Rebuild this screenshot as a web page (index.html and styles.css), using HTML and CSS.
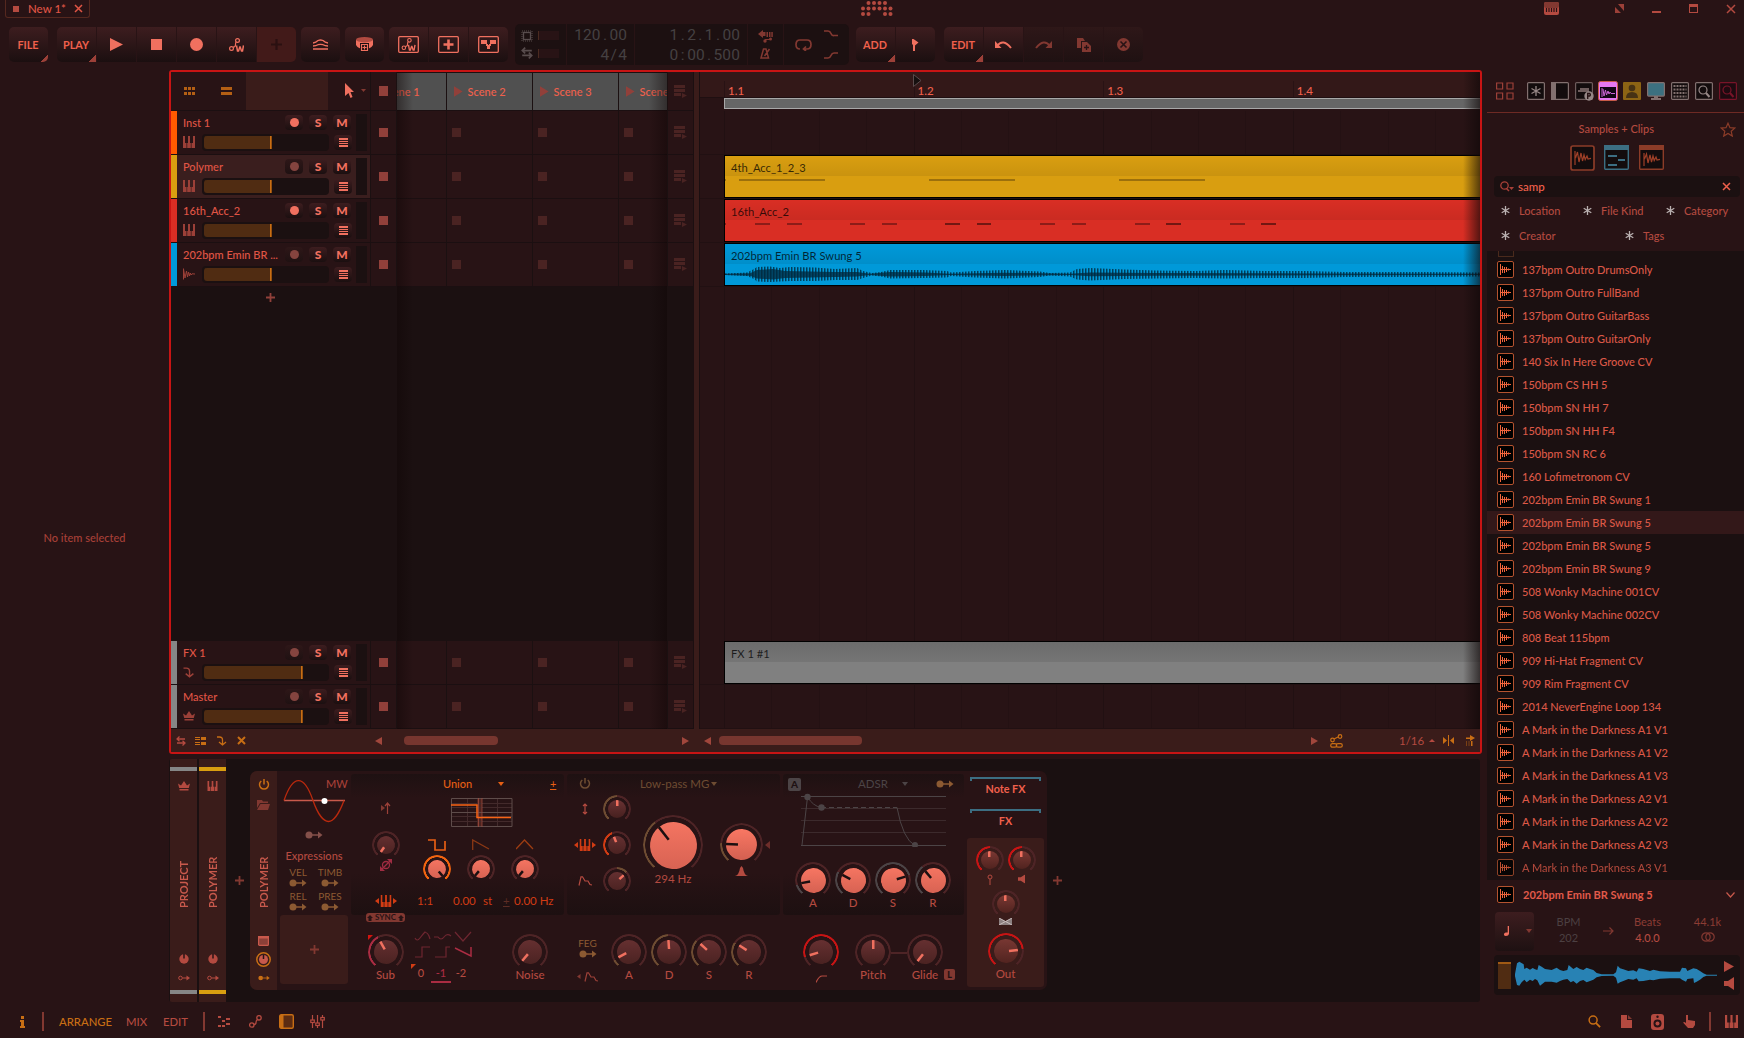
FILE: index.html
```html
<!DOCTYPE html>
<html lang="en">
<head>
<meta charset="utf-8">
<title>New 1*</title>
<link rel="stylesheet" href="styles.css">
</head>
<body>
<svg class="sprite" aria-hidden="true">
  <symbol id="piano" viewBox="0 0 12 12"><path fill="currentColor" d="M0 0h2v7h1.500v5H0zM4.200 7H5V0h2v7h.8v5H4.200zM8.500 7H10V0h2v12H8.500z"/></symbol>
  <symbol id="wave" viewBox="0 0 12 12"><path fill="none" stroke="currentColor" d="M.5 .5v11M.5 1l1.500 9L3.500 3l1 6L5.500 4l1 4 .8-3 .9 2 .8-1.200L12 6"/></symbol>
  <symbol id="crown" viewBox="0 0 12 10"><path fill="currentColor" d="M0 2.500l3 2L6 0l3 4.500 3-2L10.800 7H1.200zM1.500 8h9v1.500h-9z"/></symbol>
  <symbol id="fxarrow" viewBox="0 0 10 10"><path fill="none" stroke="currentColor" stroke-width="1.300" d="M0 1h2.500q3 0 3 3v5M2 6l3.500 3L9 6"/></symbol>
  <symbol id="mod" viewBox="0 0 18 8"><circle cx="4" cy="4" r="3.500" fill="currentColor"/><path stroke="currentColor" stroke-width="1.300" d="M7 4h7"/><path fill="currentColor" d="M13 .5L17.500 4 13 7.500z"/></symbol>
  <symbol id="modo" viewBox="0 0 12 6"><circle cx="2.500" cy="3" r="1.800" fill="none" stroke="currentColor"/><path stroke="currentColor" d="M4.500 3h5"/><path fill="currentColor" d="M8.500 .5L12 3 8.500 5.500z"/></symbol>
  <symbol id="plus" viewBox="0 0 10 10"><path stroke="currentColor" stroke-width="2" d="M5 0v10M0 5h10"/></symbol>
  <symbol id="list" viewBox="0 0 9 9"><path fill="currentColor" d="M0 0h9v2H0zM0 3h9v1H0zM0 5h9v1H0zM0 7h9v2H0z"/></symbol>
  <symbol id="ret" viewBox="0 0 13 13"><path fill="currentColor" d="M0 0h11v3H0zM0 4h11v3H0zM0 8h7v3H0zM8 8l5 2.500L8 13z"/></symbol>
  <symbol id="autow" viewBox="0 0 15 14"><g fill="none" stroke="currentColor" stroke-width="1.200"><circle cx="2.500" cy="10.500" r="1.900"/><circle cx="8.500" cy="2.500" r="1.900"/><path d="M4 9.200q2.500 0 2.500-2.500t1-2.500"/><path stroke-width="1.500" d="M7.500 7.500l1 5.500h1l1.300-4h.4l1.300 4h1l1-5.500"/></g></symbol>
  <symbol id="swap" viewBox="0 0 10 10"><path fill="none" stroke="currentColor" stroke-width="1.300" d="M1 3h8M3.500 .5L1 3l2.500 2.300M1 7h8M6.500 4.700L9 7 6.500 9.500"/></symbol>
  <symbol id="power" viewBox="0 0 12 12"><path fill="none" stroke="currentColor" stroke-width="1.500" d="M6 0v5.500M3.300 2a4.500 4.500 0 1 0 5.400 0"/></symbol>
  <symbol id="star" viewBox="0 0 9 9"><path stroke="currentColor" stroke-width="1.300" d="M4.500 0v9M.7 2.300l7.600 4.400M.7 6.700l7.600-4.400"/></symbol>
  <symbol id="cross" viewBox="0 0 9 9"><path stroke="currentColor" stroke-width="1.500" d="M1 1l7 7M8 1L1 8"/></symbol>
  <symbol id="search" viewBox="0 0 14 14"><circle cx="5.500" cy="5.500" r="4.300" fill="none" stroke="currentColor" stroke-width="1.600"/><path stroke="currentColor" stroke-width="2" d="M8.500 8.500l4.500 4.500"/></symbol>
  <symbol id="sample" viewBox="0 0 17 17"><rect x=".5" y=".5" width="16" height="16" rx="1.500" fill="#000" stroke="#b4532f"/><path stroke="#f0643c" d="M3.500 3v11M5.500 5v7M7.500 6v6M9.500 6v5M11.500 7.500v2M3.500 8.500H14"/></symbol>
  <symbol id="env" viewBox="0 0 14 10"><path fill="none" stroke="currentColor" stroke-width="1.200" d="M1 9.500L3 .8h1.500L7 5h3l2 3.500 2 .5"/></symbol>
  <symbol id="dial" viewBox="0 0 10 10"><circle cx="5" cy="5" r="4.700" fill="currentColor"/><path stroke="#281315" stroke-width="1.500" d="M5 0v4.500"/></symbol>
  <symbol id="spk" viewBox="0 0 10 13"><path fill="currentColor" d="M0 4h4l6-4v13L4 9H0z"/></symbol>
</svg>

<header class="titlebar">
  <div class="tab"><i class="dot"></i><span>New 1*</span><svg width="9" height="9"><use href="#cross"/></svg></div>
  <svg class="logo" width="32" height="16"><g fill="#b44a40"><circle cx="7.500" cy="3" r="2"/><circle cx="13" cy="3" r="2"/><circle cx="18.500" cy="3" r="2"/><circle cx="24" cy="3" r="2"/><circle cx="2" cy="8.500" r="2"/><circle cx="7.500" cy="8.500" r="2"/><circle cx="13" cy="8.500" r="2"/><circle cx="18.500" cy="8.500" r="2"/><circle cx="24" cy="8.500" r="2"/><circle cx="29.500" cy="8.500" r="2"/><circle cx="2" cy="14" r="2"/><circle cx="7.500" cy="14" r="2"/><circle cx="24" cy="14" r="2"/><circle cx="29.500" cy="14" r="2"/></g></svg>
  <div class="winbtns">
    <svg width="15" height="13"><rect width="15" height="13" rx="2" fill="#b44a40"/><rect width="15" height="6" rx="2" fill="#823831"/><path stroke="#281315" stroke-width="1.200" d="M2.500 6v4M5 6v4M7.500 6v4M10 6v4M12.500 6v4"/></svg>
    <svg width="9" height="9"><path fill="#9c4038" d="M0 3v6h6zM3 0h6v7z"/></svg>
    <svg width="9" height="9"><path fill="#b44a40" d="M0 7h9v2H0z"/></svg>
    <svg width="9" height="9"><path fill="#b44a40" d="M0 0h9v9H0zM1 3v5h7V3z" fill-rule="evenodd"/></svg>
    <svg width="10" height="10"><path stroke="#b44a40" stroke-width="1.500" d="M1 1l8 8M9 1L1 9"/></svg>
  </div>
</header>

<nav class="toolbar">
  <div class="group"><button class="tb menu">FILE</button></div>
  <div class="group g-play">
    <button class="tb menu">PLAY</button>
    <button class="tb"><svg width="13" height="13"><path fill="currentColor" d="M0 0l13 6.500L0 13z"/></svg></button>
    <button class="tb"><svg width="11" height="11"><path fill="currentColor" d="M0 0h11v11H0z"/></svg></button>
    <button class="tb"><svg width="13" height="13"><circle cx="6.500" cy="6.500" r="6.500" fill="currentColor"/></svg></button>
    <button class="tb"><svg width="15" height="14"><use href="#autow"/></svg></button>
    <button class="tb lit"><svg width="11" height="11" viewBox="0 0 10 10"><use href="#plus"/></svg></button>
  </div>
  <div class="group g5"><button class="tb"><svg width="15" height="11"><path fill="none" stroke="currentColor" stroke-width="1.300" d="M0 4q3-.5 5-2.500 2.500-1 5 0Q12 3.500 15 4M0 7q3-.2 5-1.300 2.500-.7 5 0Q12 6.800 15 7M0 10h15"/></svg></button></div>
  <div class="group g5"><button class="tb"><svg width="17" height="15"><path fill="currentColor" d="M0 3v5q2 4 8.500 4T17 8V3z"/><ellipse cx="8.500" cy="2.700" rx="8.500" ry="2.700" fill="#b04a40"/><path fill="#1c1011" d="M4 6h9v9H4z"/><path fill="none" stroke="currentColor" stroke-width="1.200" d="M5.500 7.500h6v6h-6zM8.500 8.500v4M6.500 10.500h4"/></svg></button></div>
  <div class="group g5">
    <button class="tb"><svg width="21" height="17"><rect x=".7" y=".7" width="19.600" height="15.600" rx="1" fill="none" stroke="currentColor" stroke-width="1.300"/><svg x="3" y="2" width="15" height="13"><use href="#autow"/></svg></svg></button>
    <button class="tb"><svg width="21" height="17"><rect x=".7" y=".7" width="19.600" height="15.600" rx="1" fill="none" stroke="currentColor" stroke-width="1.300"/><path stroke="currentColor" stroke-width="2.600" d="M10.500 3.500v10M5.500 8.500h10"/></svg></button>
    <button class="tb"><svg width="21" height="17"><rect x=".7" y=".7" width="19.600" height="15.600" rx="1" fill="none" stroke="currentColor" stroke-width="1.300"/><path fill="currentColor" d="M3 4h6v4H3zM12 4h6v4h-6zM8 8h2v2H8zM11 8h2v2h-2zM9 9h3v4H9z"/></svg></button>
  </div>
  <div class="transport">
    <div class="tc meters">
      <div><svg width="12" height="12"><rect x="2.500" y="2.500" width="7" height="7" fill="none" stroke="#584c4d" stroke-width="1.300"/><rect x="1" y="1" width="10" height="10" fill="none" stroke="#584c4d" stroke-dasharray="1 1"/></svg><i></i></div>
      <div><svg width="12" height="12" viewBox="0 0 10 10" color="#584c4d"><use href="#swap"/></svg><i></i></div>
    </div>
    <div class="tc num n1"><span>120<i>.</i>00</span><span>4<i>/</i>4</span></div>
    <div class="tc num n2"><span>1<i>.</i>2<i>.</i>1<i>.</i>00</span><span>0<i>:</i>00<i>.</i>500</span></div>
    <div class="tc ic">
      <svg width="15" height="13"><path fill="#823831" d="M0 4L5 0v2h2.500v4H5v2zM8.500 2H10v5H8.500zM11 2h1.500v5H11zM13.300 2h1.500v5h-1.500zM7 9h6v1H7z"/><circle cx="7" cy="11" r="1.700" fill="#823831"/><circle cx="12.500" cy="9" r="1.500" fill="#823831"/></svg>
      <svg width="11" height="11"><path fill="none" stroke="#823831" stroke-width="1.500" d="M1 10L3.500 1h2.500l2.500 9zM4.500 8l5-7"/></svg>
    </div>
    <div class="tc loop">
      <svg width="17" height="12"><path fill="none" stroke="#823831" stroke-width="1.700" d="M5 10Q1 10 1 5.500T5 1h7q4 0 4 4.500T12 10H9M11 7.500L8.500 10l2.500 2"/></svg>
      <div><svg width="14" height="7"><path fill="none" stroke="#823831" stroke-width="1.700" d="M0 1h4q2 0 3 2.500T10 5.500h4"/></svg><svg width="14" height="7"><path fill="none" stroke="#823831" stroke-width="1.700" d="M0 6h4q2 0 3-2.500T10 1h4"/></svg></div>
    </div>
  </div>
  <div class="group g-add"><button class="tb menu">ADD</button><button class="tb"><svg width="7" height="12"><path fill="currentColor" d="M0 0h1.500l5 3.500-3.500 3V12H1V6L0 5z"/></svg></button></div>
  <div class="group g-edit">
    <button class="tb menu">EDIT</button>
    <button class="tb"><svg width="17" height="9"><path fill="none" stroke="currentColor" stroke-width="2" d="M2 6q6-8 14 2"/><path fill="currentColor" d="M0 1v7h6.500z"/></svg></button>
    <button class="tb dim"><svg width="17" height="9"><path fill="none" stroke="currentColor" stroke-width="2" d="M15 6q-6-8-14 2"/><path fill="currentColor" d="M17 1v7h-6.500z"/></svg></button>
    <button class="tb dim"><svg width="14" height="14"><path fill="currentColor" d="M0 0h6l2 3H4v7H0zM5 4h5l4 4v6H5z"/><path stroke="#281315" stroke-width="1.300" d="M9.500 7v5M7 9.500h5"/></svg></button>
    <button class="tb dim"><svg width="13" height="13"><circle cx="6.500" cy="6.500" r="6.500" fill="currentColor"/><path stroke="#281315" stroke-width="1.600" d="M3.500 3.500l6 6M9.500 3.500l-6 6"/></svg></button>
  </div>
</nav>

<main class="work">
  <aside class="inspector">No item selected</aside>

  <div class="center">
    <section class="arranger">
      <div class="arr-main">
        <div class="tracks">
          <div class="row scenes">
            <div class="head-tools">
              <svg width="11" height="8"><path fill="#b45f14" d="M0 0h3v3H0zM4 0h3v3H4zM8 0h3v3H8zM0 5h3v3H0zM4 5h3v3H4zM8 5h3v3H8z"/></svg>
              <svg width="11" height="8"><path fill="#b45f14" d="M0 0h11v3H0zM0 5h11v3H0z"/></svg>
              <div class="overview"></div>
              <svg width="22" height="16"><path fill="#f0705f" d="M0 0l9 9H5.500l2 5-2 1-2-5L0 13z"/><path fill="#823831" d="M16 6h5l-2.500 3z"/></svg>
            </div>
            <div class="stopcell"><i></i></div>
            <div class="cells"><div class="scene">Scene 1</div><div class="scene">Scene 2</div><div class="scene">Scene 3</div><div class="scene">Scene 4</div></div>
            <div class="retcell"><svg width="13" height="13"><use href="#ret"/></svg></div>
          </div>

          <div class="row track orange">
            <div class="thead"><div class="l1"><b>Inst 1</b><span class="sb"><i class="rec on"></i></span><span class="sb">S</span><span class="sb">M</span></div>
              <div class="l2"><svg width="12" height="12"><use href="#piano"/></svg><div class="fader"><i></i></div><span class="sb"><svg width="9" height="9"><use href="#list"/></svg></span></div><div class="vu"></div></div>
            <div class="stopcell"><i></i></div><div class="cells"><div class="slot"></div><div class="slot"></div><div class="slot"></div><div class="slot"></div></div>
            <div class="retcell"><svg width="13" height="13"><use href="#ret"/></svg></div>
          </div>
          <div class="row track yellow selected">
            <div class="thead"><div class="l1"><b>Polymer</b><span class="sb off"><i class="rec"></i></span><span class="sb">S</span><span class="sb">M</span></div>
              <div class="l2"><svg width="12" height="12"><use href="#piano"/></svg><div class="fader"><i></i></div><span class="sb"><svg width="9" height="9"><use href="#list"/></svg></span></div><div class="vu"></div></div>
            <div class="stopcell"><i></i></div><div class="cells"><div class="slot"></div><div class="slot"></div><div class="slot"></div><div class="slot"></div></div>
            <div class="retcell"><svg width="13" height="13"><use href="#ret"/></svg></div>
          </div>
          <div class="row track red">
            <div class="thead"><div class="l1"><b>16th_Acc_2</b><span class="sb"><i class="rec on"></i></span><span class="sb">S</span><span class="sb">M</span></div>
              <div class="l2"><svg width="12" height="12"><use href="#piano"/></svg><div class="fader"><i></i></div><span class="sb"><svg width="9" height="9"><use href="#list"/></svg></span></div><div class="vu"></div></div>
            <div class="stopcell"><i></i></div><div class="cells"><div class="slot"></div><div class="slot"></div><div class="slot"></div><div class="slot"></div></div>
            <div class="retcell"><svg width="13" height="13"><use href="#ret"/></svg></div>
          </div>
          <div class="row track blue">
            <div class="thead"><div class="l1"><b>202bpm Emin BR ...</b><span class="sb off"><i class="rec"></i></span><span class="sb">S</span><span class="sb">M</span></div>
              <div class="l2"><svg width="12" height="12"><use href="#wave"/></svg><div class="fader"><i></i></div><span class="sb"><svg width="9" height="9"><use href="#list"/></svg></span></div><div class="vu"></div></div>
            <div class="stopcell"><i></i></div><div class="cells"><div class="slot"></div><div class="slot"></div><div class="slot"></div><div class="slot"></div></div>
            <div class="retcell"><svg width="13" height="13"><use href="#ret"/></svg></div>
          </div>
          <div class="empty"><svg width="9" height="9" viewBox="0 0 10 10"><use href="#plus"/></svg></div>
          <div class="row track grey">
            <div class="thead"><div class="l1"><b>FX 1</b><span class="sb off"><i class="rec"></i></span><span class="sb">S</span><span class="sb">M</span></div>
              <div class="l2"><svg width="12" height="11"><use href="#fxarrow"/></svg><div class="fader hi"><i></i></div><span class="sb"><svg width="9" height="9"><use href="#list"/></svg></span></div><div class="vu"></div></div>
            <div class="stopcell"><i></i></div><div class="cells"><div class="slot"></div><div class="slot"></div><div class="slot"></div><div class="slot"></div></div>
            <div class="retcell"><svg width="13" height="13"><use href="#ret"/></svg></div>
          </div>
          <div class="row track grey">
            <div class="thead"><div class="l1"><b>Master</b><span class="sb off"><i class="rec"></i></span><span class="sb">S</span><span class="sb">M</span></div>
              <div class="l2"><svg width="12" height="10"><use href="#crown"/></svg><div class="fader hi"><i></i></div><span class="sb"><svg width="9" height="9"><use href="#list"/></svg></span></div><div class="vu"></div></div>
            <div class="stopcell"><i></i></div><div class="cells"><div class="slot"></div><div class="slot"></div><div class="slot"></div><div class="slot"></div></div>
            <div class="retcell"><svg width="13" height="13"><use href="#ret"/></svg></div>
          </div>
          <div class="shade"></div>
        </div>
        <div class="splitter"></div>
        <div class="timeline">
          <div class="ruler"><span>1.1</span><span>1.2</span><span>1.3</span><span>1.4</span>
            <svg class="playhead" width="9" height="13"><path fill="#16100f" stroke="#5a4a4b" d="M.5 .5L8 6.500 .5 12.500z"/></svg></div>
          <div class="loopbar"></div>
          <div class="lanes">
            <div class="lane"></div>
            <div class="lane"><div class="clip cy"><span>4th_Acc_1_2_3</span>
              <svg width="755" height="20"><path stroke="#9c700c" stroke-width="2" d="M0 4h1M14 4h86M204 4h86M394 4h86"/></svg></div></div>
            <div class="lane"><div class="clip cr"><span>16th_Acc_2</span>
              <svg width="755" height="20"><path stroke="#8d1c18" stroke-width="2" d="M0 4h1M30 4h15M62 4h15M125 4h15M157 4h15M410 4h15M315 4h15M347 4h14M505 4h15"/><path stroke="#731712" stroke-width="2" d="M220 4h15M252 4h14M441 4h15M536 4h15"/></svg></div></div>
            <div class="lane"><div class="clip cb"><span>202bpm Emin BR Swung 5</span>
              <svg width="755" height="20"><defs><pattern id="st" width="3" height="20" patternUnits="userSpaceOnUse"><path fill="#00283c" fill-opacity=".8" d="M0 0h1.500v20H0z"/></pattern></defs>
                <path fill="url(#st)" d="M0 9.500L12 9 22 8.500 29 5 32 3 45 2.500 55 4 65 3 90 3.500 110 5 132 4 138 7 147 9 156 8 165 6 198 6 222 7 226 8.500 250 7 280 6 315 7.500 325 9 345 8.500 352 5 365 4 400 5.500 430 6.500 470 7 500 6 540 7 580 7 620 8 700 8 755 8.500V12.500L700 13 620 13 580 14 540 14 500 14.500 470 14 430 14.500 400 15 365 16.500 352 15.500 345 12.500 325 11.500 315 13 280 14.500 250 13.500 226 12 222 13.500 198 14 165 14.500 156 12.500 147 11.500 138 14 132 16 110 16 90 17 65 17 45 18 32 17.500 29 15 22 12 0 11z"/>
                <path fill="#00283c" opacity=".75" d="M0 9.700L25 9.300 32 6 48 5 60 7 110 8 132 8 145 9.700 165 8 200 8.500 225 9.700 280 8.700 345 9.700 365 8.500 430 9 600 9.500 755 9.700V11L600 11.200 430 11.800 365 12.200 345 11 280 12 225 11 200 12 165 12.500 145 11 132 12.500 110 13 60 14 48 15.500 32 14.500 25 11.700 0 11z"/></svg></div></div>
            <div class="gap"></div>
            <div class="lane"><div class="clip cg"><span>FX 1 #1</span></div></div>
            <div class="lane"></div>
          </div>
        </div>
      </div>
      <div class="arr-foot">
        <svg class="f1" width="10" height="10"><use href="#swap"/></svg>
        <svg class="f2" width="11" height="8"><path fill="currentColor" d="M0 0h5v1H0zM0 2h5v1H0zM0 5h5v1H0zM0 7h5v1H0zM6 0h5v3H6zM6 5h5v3H6z"/></svg>
        <svg class="f3" width="10" height="10"><use href="#fxarrow"/></svg>
        <svg class="f4" width="9" height="9"><path stroke="currentColor" stroke-width="2" d="M1 1l7 7M8 1L1 8"/></svg>
        <i class="al a1"></i><div class="sbar s1"></div><i class="ar a2"></i>
        <i class="al a3"></i><div class="sbar s2"></div><i class="ar a4"></i>
        <svg class="f5" width="13" height="14"><g fill="none" stroke="currentColor" stroke-width="1.200"><circle cx="2.500" cy="6" r="1.800"/><circle cx="10" cy="2.500" r="1.800"/><path d="M4 5l4-2"/><rect x=".7" y="9.700" width="6" height="3.500" rx="1.700"/><rect x="6.300" y="9.700" width="6" height="3.500" rx="1.700"/></g></svg>
        <span class="snap">1/16</span><svg class="f6" width="6" height="3"><path fill="#b44a40" d="M0 3l3-3 3 3z"/></svg>
        <svg class="f7" width="11" height="11"><path fill="currentColor" d="M0 2l4 3.500L0 9zM11 2L7 5.500 11 9zM5 0h1v11H5z"/></svg>
        <svg class="f8" width="10" height="12"><path fill="currentColor" d="M1 2.500h4V0l5 3-5 3V4H1zM6 6h1.500v5H6z"/><path stroke="#7a4014" d="M1.500 6v5M4 6v5"/></svg>
      </div>
    </section>

    <section class="devices">
      <div class="strip"><i class="cap sg"></i><svg class="si" width="12" height="10"><use href="#crown"/></svg><span>PROJECT</span><svg class="sd" width="10" height="10"><use href="#dial"/></svg><svg width="12" height="6"><use href="#modo"/></svg><i class="cap2 sg"></i></div>
      <div class="strip"><i class="cap sy"></i><svg class="si" width="11" height="11"><use href="#piano"/></svg><span>POLYMER</span><svg class="sd" width="10" height="10"><use href="#dial"/></svg><svg width="12" height="6"><use href="#modo"/></svg><i class="cap2 sy"></i></div>
      <svg class="addl" width="9" height="9" viewBox="0 0 10 10"><use href="#plus"/></svg>

      <div class="device">
        <div class="rail">
          <svg class="or" width="12" height="12"><use href="#power"/></svg>
          <svg class="r2" width="13" height="10"><path fill="#823831" d="M0 0h5l1 1.500h5V3H3L0 8zM3.500 4H13l-2 6H0z"/></svg>
          <span>POLYMER</span>
          <svg width="11" height="10"><rect x=".6" y=".6" width="9.800" height="8.800" rx="1" fill="#8c4038" stroke="#c8594c" stroke-width="1.200"/><path fill="#c8594c" d="M0 0h11v2.500H0z"/></svg>
          <svg class="r4" width="15" height="15"><circle cx="7.500" cy="7.500" r="6.700" fill="none" stroke="#c86e14" stroke-width="1.500"/><circle cx="7.500" cy="7.500" r="4.500" fill="#c8594c"/><path stroke="#281315" stroke-width="1.500" d="M7.500 3v4"/></svg>
          <svg class="r5 or" width="12" height="6" viewBox="0 0 18 8"><use href="#mod"/></svg>
        </div>

        <div class="mods">
          <svg width="61" height="43"><path stroke="#c85a4c" stroke-width="1.500" d="M0 20.500h61"/><path fill="none" stroke="#b8290e" stroke-width="1.300" d="M0 20.500C5 6 10 .7 14.500 .7S24 6 29 20.500 40 41.500 44.500 41.500 55 34 60 20.500"/><circle cx="40.500" cy="21" r="3" fill="#fff"/><text x="42" y="7.500" class="mw">MW</text></svg>
          <svg class="mm" width="18" height="8"><use href="#mod"/></svg>
          <h4>Expressions</h4>
          <div class="expr"><span>VEL<svg width="18" height="8"><use href="#mod"/></svg></span><span>TIMB<svg width="18" height="8"><use href="#mod"/></svg></span><span>REL<svg width="18" height="8"><use href="#mod"/></svg></span><span>PRES<svg width="18" height="8"><use href="#mod"/></svg></span></div>
          <div class="addmod"><svg width="9" height="9" viewBox="0 0 10 10"><use href="#plus"/></svg></div>
        </div>

        <div class="col osc">
          <div class="panel">
            <div class="oleft">
              <svg width="10" height="12"><path fill="#823831" d="M0 3l4 3-4 3z"/><path fill="none" stroke="#9c4038" stroke-width="1.200" d="M6.500 12V1M4 4l2.500-3L9 4"/></svg>
              <div class="knob sm" style="--p:-145deg;--s:0deg;--e:0deg"></div>
              <svg class="phase" width="12" height="12"><g fill="none" stroke="#a02c42" stroke-width="1.300"><circle cx="6" cy="6" r="3.500"/><path d="M2 10L10 2"/></g><path fill="#a02c42" d="M7 0h5v5zM0 7v5h5z"/></svg>
              <svg class="kbd" width="22" height="12"><path fill="#d23c14" d="M0 6l4-3v6zM22 6l-4-3v6z"/><svg x="5.500" width="11" height="12" color="#d23c14" viewBox="0 0 12 12" preserveAspectRatio="none"><use href="#piano"/></svg></svg>
              <div class="sync"><svg width="6" height="6"><path fill="currentColor" d="M3 0l3 3H4.500v3h-3V3H0z"/></svg>SYNC<svg width="6" height="6"><path fill="currentColor" d="M3 0l3 3H4.500v3h-3V3H0z"/></svg></div>
            </div>
            <div class="oright">
              <div class="otitle"><span>Union</span><i class="dn"></i><u>+</u></div>
              <svg class="scope" width="62" height="30"><path fill="#4e221e" d="M26 0h5v29h-5z"/><path stroke="#432a2b" d="M1 5.500h60M1 9.500h60M1 18.500h60M1 23.500h60M16.500 0v29M46.500 0v29"/><path fill="none" stroke="#5e4c4a" d="M.5 .5h60.500v28H.5zM1 14.500h60"/><path stroke="#a85044" d="M27.500 0v29M31 0v29" opacity=".7"/><path fill="none" stroke="#fa6414" stroke-width="1.500" d="M0 7h26v12.500h34"/></svg>
              <div class="trio shapes"><svg width="18" height="12"><path fill="none" stroke="#e65f14" stroke-width="1.700" d="M0 1h7v10h10V2"/></svg><svg width="18" height="12"><path fill="none" stroke="#8c3814" stroke-width="1.300" d="M.7 11V1L17 10"/></svg><svg width="18" height="12"><path fill="none" stroke="#9c3c12" stroke-width="1.300" d="M0 10l8.500-9 8.500 9"/></svg></div>
              <div class="trio"><div class="knob sm lit or" style="--p:140deg;--s:0deg;--e:280deg"></div><div class="knob sm lit" style="--p:-140deg;--s:0deg;--e:0deg"></div><div class="knob sm lit" style="--p:-140deg;--s:0deg;--e:0deg"></div></div>
              <div class="vals"><span class="v1">1:1</span><span class="v2">0.00</span><span class="v3">st</span><u>+</u><span>0.00 Hz</span></div>
            </div>
          </div>
          <div class="lower">
            <div class="kc k1"><div class="knob pk" style="--p:-30deg;--s:0deg;--e:112deg"></div>Sub<svg class="corner" width="5" height="5"><path fill="#d2140f" d="M0 0h5L0 5z"/></svg></div>
            <div class="subwave">
              <svg width="58" height="28"><g fill="none" stroke="#6e2630" stroke-width="1.200"><path d="M1 7q2 4 5 0t5-6q3 1 4 4l1 3M20 6h4q3 4 6 0t7-1M41 1l8 9 8-9M1 26h7V16h8M21 26h11V16h4"/><path stroke="#aa2c42" stroke-width="1.500" d="M41 17l16 8V16"/></g></svg>
              <div class="oct"><span>0</span><span class="sel">-1</span><span>-2</span><svg class="corner" width="5" height="5"><path fill="#d23c14" d="M0 0h5L0 5z"/></svg></div>
            </div>
            <div class="kc k2"><div class="knob" style="--p:-140deg;--s:0deg;--e:0deg"></div>Noise</div>
          </div>
        </div>

        <div class="col flt">
          <div class="panel">
            <div class="ftitle"><svg width="12" height="12" color="#6e4c32"><use href="#power"/></svg><span>Low-pass MG</span><i class="dn"></i></div>
            <div class="fbody">
              <div class="fsrc">
                <div><svg width="22" height="12"><path fill="none" stroke="#b44a40" stroke-width="1.200" d="M11 1v10M9 3l2-2 2 2M9 9l2 2 2-2"/></svg><div class="knob sm br" style="--p:0deg;--s:0deg;--e:140deg"></div></div>
                <div><svg width="22" height="12"><path fill="#d23c14" d="M0 6l4-3v6zM22 6l-4-3v6z"/><svg x="5.500" width="11" height="12" color="#d23c14" viewBox="0 0 12 12" preserveAspectRatio="none"><use href="#piano"/></svg></svg><div class="knob sm hot" style="--p:-22deg;--s:0deg;--e:118deg"></div></div>
                <div><svg width="22" height="10" color="#b44a40"><use href="#env"/></svg><div class="knob sm br" style="--p:48deg;--s:140deg;--e:185deg"></div></div>
              </div>
              <div class="fbig"><div class="knob xl lit br" style="--p:-38deg;--s:0deg;--e:102deg"></div>294 Hz</div>
              <div class="fres"><div class="knob lg lit br" style="--p:-87deg;--s:0deg;--e:53deg"></div><svg width="13" height="10"><path fill="#b44a40" d="M0 10q4-1 5-8l1.500-2L8 2q1 7 5 8z"/></svg></div>
              <svg class="ftri" width="5" height="8"><path fill="#6e2e2a" d="M5 0v8L0 4z"/></svg>
            </div>
          </div>
          <div class="lower">
            <div class="feg">FEG<svg width="18" height="8"><use href="#mod"/></svg><svg class="fe" width="21" height="10" color="#9c4038"><path fill="#823831" d="M3.500 2v5L0 4.500z"/><svg x="7" width="14" height="10"><use href="#env"/></svg></svg></div>
            <div class="kc"><div class="knob br" style="--p:-118deg;--s:0deg;--e:20deg"></div>A</div>
            <div class="kc"><div class="knob br" style="--p:-4deg;--s:0deg;--e:136deg"></div>D</div>
            <div class="kc"><div class="knob br" style="--p:-48deg;--s:0deg;--e:92deg"></div>S</div>
            <div class="kc"><div class="knob br" style="--p:-57deg;--s:0deg;--e:83deg"></div>R</div>
          </div>
        </div>

        <div class="col amp">
          <div class="panel">
            <div class="atitle"><b>A</b><span>ADSR</span><i class="dn"></i><svg width="18" height="8"><use href="#mod"/></svg></div>
            <svg class="graph" width="147" height="54"><path stroke="#3c2a2c" d="M0 15.500h145M0 27.500h145M0 39.500h145"/><g fill="none" stroke="#4c4446"><path d="M0 3.500h145M0 52.500h145M1 52L6.500 4Q12 13 20 14.500"/><path stroke-dasharray="5 3" d="M20 14.500h76"/><path d="M96 14.500q6 32 18 38"/></g><g fill="#4c4446"><circle cx="6.500" cy="4" r="3.200"/><circle cx="20.500" cy="14.500" r="3.200"/><circle cx="114" cy="52" r="3"/></g></svg>
            <div class="aknobs">
              <div class="kc"><div class="knob lit gy" style="--p:-101deg;--s:0deg;--e:32deg"></div>A</div>
              <div class="kc"><div class="knob lit gy" style="--p:-62deg;--s:0deg;--e:78deg"></div>D</div>
              <div class="kc"><div class="knob lit gy" style="--p:73deg;--s:0deg;--e:213deg"></div>S</div>
              <div class="kc"><div class="knob lit gy" style="--p:-40deg;--s:0deg;--e:100deg"></div>R</div>
            </div>
          </div>
          <div class="lower">
            <div class="kc"><div class="knob rd" style="--p:-107deg;--s:33deg;--e:280deg"></div><svg class="ramp" width="11" height="8"><path fill="none" stroke="#b44a40" stroke-width="1.200" d="M0 7.500Q3 1 6 1h5"/></svg></div>
            <div class="kc"><div class="knob rd" style="--p:0deg;--s:139deg;--e:141deg"></div>Pitch</div>
            <div class="link"></div>
            <div class="kc"><div class="knob" style="--p:-142deg;--s:0deg;--e:0deg"></div>Glide</div>
            <b class="legato">L</b>
          </div>
        </div>

        <div class="chain">
          <div class="fx">Note FX</div>
          <div class="fx">FX</div>
          <div class="outbox">
            <div class="pair"><div class="kc"><div class="knob sm rd" style="--p:0deg;--s:0deg;--e:140deg"></div><svg width="6" height="11"><circle cx="3" cy="3" r="2" fill="none" stroke="#b44a40"/><path stroke="#b44a40" d="M3 5v6"/></svg></div>
            <div class="kc"><div class="knob sm rd" style="--p:0deg;--s:0deg;--e:140deg"></div><svg width="7" height="10" viewBox="0 0 10 13" color="#b44a40"><use href="#spk"/></svg></div></div>
            <div class="kc pan"><div class="knob sm rd" style="--p:0deg;--s:138deg;--e:142deg"></div><svg width="13" height="7"><path fill="#8c8080" d="M0 0v7h13V0L6.500 3.500z"/><path fill="none" stroke="#c8bcbc" d="M0 0l13 7M13 0L0 7"/></svg></div>
            <div class="kc out"><div class="knob rd" style="--p:84deg;--s:0deg;--e:224deg"></div>Out</div>
          </div>
        </div>
      </div>
      <svg class="addl addr" width="9" height="9" viewBox="0 0 10 10"><use href="#plus"/></svg>
    </section>
  </div>

  <aside class="browser">
    <div class="btabs">
      <svg class="quad" width="18" height="18"><path fill="none" stroke="#9c4038" stroke-width="1.200" d="M.6 1h6v6h-6zM11 1h6v6h-6zM.6 11h6v6h-6zM11 11h6v6h-6z"/></svg>
      <svg width="18" height="18"><rect x=".6" y=".6" width="16.800" height="16.800" rx="1" fill="#130c0d" stroke="#82706f" stroke-width="1.200"/><path stroke="#968786" stroke-width="1.300" d="M9 4v10M4.500 6.500l9 5M4.500 11.500l9-5"/></svg>
      <svg width="18" height="18"><rect x=".6" y=".6" width="16.800" height="16.800" rx="1" fill="#130c0d" stroke="#82706f" stroke-width="1.200"/><path fill="#82706f" d="M0 0h5v18H0z"/></svg>
      <svg width="20" height="19"><rect x=".6" y=".6" width="16.800" height="16.800" rx="1" fill="#130c0d" stroke="#6e5c5c" stroke-width="1.200"/><path fill="#6e5c5c" d="M5 6h9v4H3V8h2z"/><circle cx="14" cy="14" r="4.700" fill="#968786"/><path fill="none" stroke="#281315" stroke-width="1.400" d="M12.700 17v-5.500h2q1.300 1.200 0 2.500h-2"/></svg>
      <svg class="act" width="20" height="20"><rect x=".5" y=".5" width="19" height="19" rx="2" fill="#e678f0" stroke="#c85a46"/><path fill="#120614" d="M2 6h16v11H2z"/><path fill="none" stroke="#c864d2" d="M4 7v9M5 8l1 7 1.500-6 1 5L10 10l1 3 1-2 1 1.500h4"/></svg>
      <svg width="18" height="18"><rect width="18" height="18" rx="1" fill="#8c6414"/><circle cx="9" cy="6" r="3.300" fill="#463214"/><path fill="#463214" d="M3 16q0-6 6-6t6 6z"/></svg>
      <svg width="18" height="18"><rect x=".6" y=".6" width="16.800" height="13.500" rx="1" fill="#3c7080" stroke="#82706f" stroke-width="1.200"/><path fill="#82706f" d="M7 14h4v2h3v2H4v-2h3z"/></svg>
      <svg width="18" height="18"><rect x=".6" y=".6" width="16.800" height="16.800" rx="1" fill="#130c0d" stroke="#82706f" stroke-width="1.200"/><path stroke="#82706f" stroke-width="2" stroke-dasharray="2 1" d="M2.500 4h13M2.500 7.500h13M2.500 11h13M2.500 14.500h13"/></svg>
      <svg width="18" height="18"><rect x=".6" y=".6" width="16.800" height="16.800" rx="1" fill="#130c0d" stroke="#82706f" stroke-width="1.200"/><circle cx="8" cy="8" r="4" fill="none" stroke="#968786" stroke-width="1.200"/><path stroke="#968786" stroke-width="2" d="M11 11l3.500 4"/></svg>
      <svg width="18" height="18"><rect x=".6" y=".6" width="16.800" height="16.800" rx="1" fill="#1e0a10" stroke="#781428" stroke-width="1.200"/><circle cx="8" cy="8" r="4" fill="none" stroke="#781428" stroke-width="1.200"/><path stroke="#781428" stroke-width="2" d="M11 11l3.500 4"/></svg>
    </div>
    <div class="bhead"><span>Samples + Clips</span><svg width="16" height="15"><path fill="none" stroke="#8c3c28" stroke-width="1.200" d="M8 1.200l2 4.500 4.800.4-3.600 3.200 1.100 4.800L8 11.500l-4.300 2.600 1.100-4.800L1.200 6.100l4.800-.4z"/></svg></div>
    <div class="kinds">
      <svg width="25" height="26"><rect x="1" y="1" width="23" height="24" rx="2" fill="#130c0d" stroke="#8c3c28" stroke-width="1.700"/><path fill="none" stroke="#a04028" stroke-width="1.200" d="M5 6v14M5.500 13l2-6 1.500 10L11 8l1.500 8L14 10l1.200 4.500L17 11l1 3 3-.7"/></svg>
      <svg width="25" height="25"><rect x=".7" y=".7" width="23.600" height="23.600" rx="1" fill="#130c0d" stroke="#3c6e82" stroke-width="1.400"/><path fill="#3c6e82" d="M0 0h25v5H0zM4 10h9v2H4zM14 14h7v2h-7zM4 19h9v2H4z"/></svg>
      <svg width="25" height="25"><rect x=".7" y=".7" width="23.600" height="23.600" rx="1" fill="#130c0d" stroke="#8c3c28" stroke-width="1.400"/><path fill="#8c3c28" d="M0 0h25v5H0z"/><path fill="none" stroke="#a04028" stroke-width="1.200" d="M5 8v13M5.500 14l2-5 1.500 9 2-8 1.500 7 1.500-6 1.200 4.500L17 12l1 3 3-.7"/></svg>
    </div>
    <div class="searchbox"><svg width="14" height="11"><circle cx="4.500" cy="4.500" r="3.700" fill="none" stroke="#a84038" stroke-width="1.300"/><path stroke="#a84038" stroke-width="1.500" d="M6.500 7.500L9 10"/><path fill="#a84038" d="M9 6h5l-2.500 3z"/></svg><span>samp</span><svg width="9" height="9"><use href="#cross"/></svg></div>
    <div class="filters"><span class="w1"><svg width="9" height="9"><use href="#star"/></svg>Location</span><span class="w2"><svg width="9" height="9"><use href="#star"/></svg>File Kind</span><span><svg width="9" height="9"><use href="#star"/></svg>Category</span></div>
    <div class="filters"><span class="w3"><svg width="9" height="9"><use href="#star"/></svg>Creator</span><span><svg width="9" height="9"><use href="#star"/></svg>Tags</span></div>
    <ul class="files">
      <li class="ghost"></li>
      <li><svg><use href="#sample"/></svg>137bpm Outro DrumsOnly</li>
      <li><svg><use href="#sample"/></svg>137bpm Outro FullBand</li>
      <li><svg><use href="#sample"/></svg>137bpm Outro GuitarBass</li>
      <li><svg><use href="#sample"/></svg>137bpm Outro GuitarOnly</li>
      <li><svg><use href="#sample"/></svg>140 Six In Here Groove CV</li>
      <li><svg><use href="#sample"/></svg>150bpm CS HH 5</li>
      <li><svg><use href="#sample"/></svg>150bpm SN HH 7</li>
      <li><svg><use href="#sample"/></svg>150bpm SN HH F4</li>
      <li><svg><use href="#sample"/></svg>150bpm SN RC 6</li>
      <li><svg><use href="#sample"/></svg>160 Lofimetronom CV</li>
      <li><svg><use href="#sample"/></svg>202bpm Emin BR Swung 1</li>
      <li class="cur"><svg><use href="#sample"/></svg>202bpm Emin BR Swung 5</li>
      <li><svg><use href="#sample"/></svg>202bpm Emin BR Swung 5</li>
      <li><svg><use href="#sample"/></svg>202bpm Emin BR Swung 9</li>
      <li><svg><use href="#sample"/></svg>508 Wonky Machine 001CV</li>
      <li><svg><use href="#sample"/></svg>508 Wonky Machine 002CV</li>
      <li><svg><use href="#sample"/></svg>808 Beat 115bpm</li>
      <li><svg><use href="#sample"/></svg>909 Hi-Hat Fragment CV</li>
      <li><svg><use href="#sample"/></svg>909 Rim Fragment CV</li>
      <li><svg><use href="#sample"/></svg>2014 NeverEngine Loop 134</li>
      <li><svg><use href="#sample"/></svg>A Mark in the Darkness A1 V1</li>
      <li><svg><use href="#sample"/></svg>A Mark in the Darkness A1 V2</li>
      <li><svg><use href="#sample"/></svg>A Mark in the Darkness A1 V3</li>
      <li><svg><use href="#sample"/></svg>A Mark in the Darkness A2 V1</li>
      <li><svg><use href="#sample"/></svg>A Mark in the Darkness A2 V2</li>
      <li><svg><use href="#sample"/></svg>A Mark in the Darkness A2 V3</li>
      <li class="fade"><svg><use href="#sample"/></svg>A Mark in the Darkness A3 V1</li>
    </ul>
    <div class="picked"><svg width="17" height="17"><use href="#sample"/></svg><b>202bpm Emin BR Swung 5</b><svg width="9" height="6"><path fill="none" stroke="#c8594c" stroke-width="1.200" d="M.5 .5l4 4.500 4-4.500"/></svg></div>
    <div class="meta">
      <button class="note"><svg width="5" height="10"><path fill="#f0705f" d="M3.700 0H5v8q-.5 2-3 2T0 8t2.500-1.500h1.200z"/></svg><i class="dn"></i></button>
      <div class="mc m1"><span>BPM</span><span>202</span></div>
      <svg width="11" height="8"><path fill="none" stroke="#823831" stroke-width="1.200" d="M0 4h10M6.500 .5L10 4 6.500 7.500"/></svg>
      <div class="mc m2"><span>Beats</span><span>4.0.0</span></div>
      <div class="mc m3"><span>44.1k</span><svg width="14" height="10"><g fill="none" stroke="#823831" stroke-width="1.200"><circle cx="5" cy="5" r="4.200"/><circle cx="9" cy="5" r="4.200"/></g></svg></div>
    </div>
    <div class="preview">
      <i class="gain"></i>
      <svg width="203" height="28" viewBox="105 364 609 84"><path fill="#2882b4" d="M105 403L111 371 118 366 131 374 133 388 140 384 150 390 158 385 165 389 172 391 176 376 185 381 195 388 215 391 230 384 240 391 250 394 262 391 266 376 272 381 280 388 290 382 300 388 310 391 320 384 330 388 340 391 350 400 365 404 400 404 408 398 413 378 420 386 430 389 445 394 460 392 470 396 476 386 490 388 510 394 520 390 540 395 570 396 600 396 606 384 618 386 622 394 640 386 650 388 660 394 670 401 680 405 711 405V408L680 408 670 412 660 420 650 426 642 430 640 416 622 418 618 426 606 420 600 416 570 416 540 417 520 422 510 420 490 424 476 425 470 416 460 420 445 418 430 424 420 428 413 432 408 414 400 408 365 409 350 413 340 420 330 424 320 428 310 421 300 424 290 432 280 424 272 428 266 422 262 418 250 420 240 424 230 429 215 426 195 426 180 438 172 422 165 418 158 424 150 420 140 428 133 420 125 428 118 438 111 436 105 410z"/></svg>
      <div><svg width="10" height="11"><path fill="#b44a40" d="M0 0l10 5.500L0 11z"/></svg><svg width="10" height="13" color="#b44a40"><use href="#spk"/></svg></div>
    </div>
  </aside>
</main>

<footer class="status">
  <svg class="info" width="5" height="12"><path fill="#c86e14" d="M1 0h3v3H1zM0 4h4v6h1v2H0v-2h1V6H0z"/></svg><i class="bar"></i>
  <span class="t1">ARRANGE</span><span class="t2">MIX</span><span class="t3">EDIT</span><i class="bar b2"></i>
  <svg class="q1" width="12" height="11"><path fill="#b44a40" d="M0 0h3v2H0zM4 4h3v2H4zM8 2h4v2H8zM0 9h3v2H0zM4 9h3v2H4zM8 7h4v2H8z"/></svg>
  <svg class="q2" width="13" height="13"><g fill="none" stroke="#b44a40" stroke-width="1.300"><circle cx="2.800" cy="10" r="2.200"/><circle cx="10" cy="2.800" r="2.200"/><path d="M5 9.500q2 0 2-2t1.500-3"/></g></svg>
  <svg class="q3" width="15" height="15"><rect x=".7" y=".7" width="13.600" height="13.600" rx="1.500" fill="#5c2c12" stroke="#c86e14" stroke-width="1.400"/><path fill="#c86e14" d="M1 1h3.500v13H1z"/></svg>
  <svg class="q4" width="15" height="13"><g fill="#281315" stroke="#b44a40" stroke-width="1.200"><path d="M2.500 0v13M7.500 0v13M12.500 0v13"/><rect x=".8" y="5" width="3.500" height="2.500"/><rect x="5.800" y="8" width="3.500" height="2.500"/><rect x="10.800" y="2.500" width="3.500" height="2.500"/></g></svg>
  <svg class="e1" width="13" height="13" viewBox="0 0 14 14" color="#c86e14"><use href="#search"/></svg>
  <svg class="e2" width="11" height="13"><path fill="#b44a40" d="M0 0h6v5h5v8H0z"/><path fill="#823831" d="M7 0l4 4H7z"/></svg>
  <svg class="e3" width="13" height="16"><rect width="13" height="16" rx="3" fill="#b44a40"/><circle cx="6.500" cy="9.500" r="4" fill="#281315"/><circle cx="6.500" cy="9.500" r="2" fill="#b44a40"/><circle cx="6.500" cy="2.800" r="1.200" fill="#281315"/></svg>
  <svg class="e4" width="12" height="13"><path fill="#b44a40" d="M3 0h2v5l7 1v4l-2 3H5L0 7.500 1.500 7 3 8z"/></svg>
  <i class="bar b3"></i>
  <svg class="e5" width="13" height="13" viewBox="0 0 12 12" color="#b44a40"><use href="#piano"/></svg>
</footer>
</body>
</html>
```
FILE: styles.css
```css
*{box-sizing:border-box}
html,body{margin:0;height:100%}
body{width:1744px;height:1038px;overflow:hidden;background:#281315;color:#d95545;font:500 11px/14px Lato,"Open Sans",sans-serif;display:flex;flex-direction:column}
.sprite{position:absolute;width:0;height:0}
svg{flex:none;display:block}
i{font-style:normal}
button{font:inherit;color:inherit;border:0;padding:0;background:none}
.dn{border:3px solid transparent;border-top:4px solid currentColor;border-bottom:0;width:0;height:0;flex:none}

/* title bar */
.titlebar{height:24px;flex:none;display:flex;align-items:flex-start}
.tab{width:85px;height:18px;margin-left:5px;border:1px solid #55281f;border-top:0;border-radius:0 0 3px 3px;display:flex;align-items:center;padding:0 6px 0 7px;color:#e05545}
.tab .dot{width:6px;height:6px;background:#b44a40}
.tab span{margin:0 auto 0 9px;font-size:11.500px}
.logo{margin:0 0 0 771px}
.winbtns{margin-left:auto;margin-right:8px;display:flex;align-items:center;height:17px}
.winbtns svg+svg{margin-left:28px}
.winbtns svg:nth-child(2){margin-left:56px}

/* toolbar */
.toolbar{height:41px;flex:none;display:flex;align-items:center;padding-left:9px}
.group{display:flex;gap:1px;border-radius:5px;overflow:hidden}
.g-play{margin-left:9px}.g5{margin-left:5px}.g-add{margin-left:7px}.g-edit{margin-left:9px}
.tb{width:39px;height:35px;display:flex;align-items:center;justify-content:center;color:#f0705f;background:linear-gradient(#3d1d1f,#1b0f10)}
.tb.menu{color:#f0604c;font-weight:700;font-size:10.800px;background:linear-gradient(135deg,transparent 50%,#9c4038 50%) right bottom/7px 8px no-repeat,linear-gradient(#3d1d1f,#1b0f10);padding:1px 1px 0 0}
.tb.lit{background:#421a19;color:#2a1011}
.tb.dim{color:#823831;background:linear-gradient(#2e1718,#1f1112)}
.transport{margin-left:7px;width:334px;height:41px;display:flex;gap:1px;border-radius:5px;overflow:hidden}
.tc{background:#1c1011;display:flex;flex-direction:column;justify-content:space-evenly}
.meters{width:51px;padding-left:6px}
.meters div{display:flex;align-items:center;gap:5px}
.meters i{width:21px;height:9px;background:#281315;border-left:1px solid #4a2a20}
.num{width:67px;padding:2px 7px 0 0;text-align:right;font:400 15.500px/19px Roboto,sans-serif;color:#454042;letter-spacing:.1px}
.num i{display:inline-block;width:8.800px;text-align:center}
.n2{width:112px}
.ic{width:35px;align-items:center}
.loop{width:65px;flex-direction:row;align-items:center}
.loop div{display:flex;flex-direction:column;gap:15px}

/* work area */
.work{display:flex;height:932px;margin-top:5px;flex:none}
.inspector{width:169px;padding-top:3px;display:flex;align-items:center;justify-content:center;color:#a84038}
.center{width:1313px;display:flex;flex-direction:column;gap:5px}
.arranger{height:684px;border:2px solid #c81414;border-radius:3px;overflow:hidden}
.arr-main{height:657px;display:flex}
.tracks{position:relative;width:522px;background:#1b1011;display:flex;flex-direction:column}
.row{height:44px;flex:none;display:flex;border-bottom:1px solid #1b0f11;gap:1px}
.scenes{height:39px}
.head-tools{width:199px;background:#281315;display:flex;align-items:center;padding-left:13px}
.head-tools svg+svg{margin-left:26px}
.overview{width:82px;height:100%;background:#3a1c1a;margin:0 17px 0 14px}
.stopcell{width:25px;background:#281315;display:flex;align-items:center;justify-content:center}
.stopcell i{width:9px;height:9px;background:#91403a}
.scenes .stopcell i{height:10px}
.cells{width:271px;display:flex;gap:1px;overflow:hidden}
.scene,.slot{width:85px;flex:none;background:#281315;display:flex;align-items:center}
.scene:first-child,.slot:first-child{margin-left:-36px}
.scene{background:#505050;color:#f0604c;margin-top:1px;padding-left:7px}
.scene::before{content:"";width:9px;height:11px;background:#91403a;clip-path:polygon(0 0,100% 50%,0 100%);margin-right:5px}
.slot::before{content:"";width:9px;height:9px;background:#4a2322;margin-left:5px}
.retcell{width:25px;background:#281315;color:#4a2322;display:flex;align-items:center;justify-content:center}
.shade{position:absolute;left:226px;width:270px;top:0;bottom:0;background:linear-gradient(90deg,rgba(15,5,5,.45),transparent 16px,transparent 252px,rgba(15,5,5,.45))}
.thead{width:199px;background:#281315;border-left:6px solid;display:grid;grid-template:19px 20px/170px 11px;column-gap:3px;padding:2px 0 0 6px}
.orange .thead{border-color:#ff5a00}.yellow .thead{border-color:#d99e10}.red .thead{border-color:#d92e24}.blue .thead{border-color:#0099d9}.grey .thead{border-color:#868686}
.selected .thead{background:#3a1e1e}
.l1,.l2{display:flex;align-items:center;color:#9c4038}
.l1 b{font-weight:500;color:#e05545;white-space:nowrap;width:102px;flex:none}
.sb{width:18px;height:15px;border-radius:4px;background:linear-gradient(#3d1d1f,#1b0f10);display:flex;align-items:center;justify-content:center;color:#f0705f;font-weight:900;font-size:12px;flex:none;margin-right:6px}
.sb.off{background:linear-gradient(#2e1718,#1f1112)}
.l1 .sb:last-child,.l2 .sb{margin-right:0}
.rec{width:9px;height:9px;border-radius:50%;background:#84443f}
.rec.on{background:#f0705f}
.fader{width:127px;height:17px;border-radius:4px;background:#1b1011;margin:0 5px 0 7px;padding:2px}
.fader i{display:block;width:68px;height:13px;border-radius:3px 0 0 3px;background:#502c12;border-right:1px solid #96500f;box-shadow:inset -1px 0 #c86e14}
.fader.hi i{width:99px}
.vu{grid-area:1/2/3/3;background:#1b1011;height:37px;margin-top:1px}
.empty{flex:1;color:#91403a;padding:6px 0 0 95px}
.splitter{width:7px;background:#3a1c1a;border:solid #1b0f11;border-width:0 1px}
.timeline{width:780px;display:flex;flex-direction:column}
.ruler{position:relative;height:26px;background:#331818;border-bottom:1px solid #1f0f11;padding:9px 0 0 24px;display:flex}
.ruler span{width:190px;flex:none;border-left:1px solid #281214;padding-left:3px;color:#f0604c;line-height:12px;padding-top:4px;margin-right:-.4px;font-size:11.500px}
.playhead{position:absolute;left:213px;top:2px}
.loopbar{height:11px;margin-left:24px;border:1px solid #a8a8a8;border-right:0;background:#666}
.lanes{flex:1;margin-top:2px;display:flex;flex-direction:column;background:repeating-linear-gradient(90deg,#211012 0 1px,transparent 1px 189.600px) 24px 0 no-repeat,repeating-linear-gradient(90deg,#241113 0 1px,transparent 1px 47.400px) 24px 0 no-repeat;position:relative}
.lanes::after{content:"";position:absolute;right:0;top:-39px;bottom:0;width:17px;background:linear-gradient(90deg,transparent,rgba(15,8,8,.65))}
.lane{height:44px;flex:none;padding-left:24px;border-bottom:1px solid #211012}
.gap{flex:1}
.clip{height:43px;border:1px solid #000;border-right:0;color:rgba(0,0,0,.75);font-weight:400}
.clip span{display:block;height:20px;padding:5px 0 0 6px;font-size:11.200px;background:linear-gradient(transparent,rgba(0,0,0,.07))}
.cy{background:#d99e10}.cr{background:#d92e24}.cb{background:#0099d9}.cg{background:#808080}
.cg span{background:linear-gradient(#6c6c6c,#757575)}
.arr-foot{height:23px;background:#3a1c1a;display:flex;align-items:center;color:#c86e14;padding-left:5px}
.f1{color:#b44a40}.f2{margin-left:9px}.f3{margin-left:11px}.f4{margin-left:10px}
.al,.ar{border:4px solid transparent;width:0;height:0}
.al{border-right:7px solid #a0463c;border-left:0}.ar{border-left:7px solid #a0463c;border-right:0}
.sbar{height:9px;border-radius:4px;background:#77362f}
.a1{margin-left:129px}.s1{width:94px;margin-left:22px}.a2{margin-left:184px}
.a3{margin-left:15px}.s2{width:143px;margin-left:8px}.a4{margin-left:449px}
.f5{margin-left:12px}.snap{margin-left:56px;color:#b44a40;width:25px;font-weight:400;font-size:11.500px}.f6{margin-left:5px}.f7{margin-left:8px}.f8{margin-left:11px}

/* device chain */
.devices{height:243px;background:#1a1011;display:flex;padding-left:1px;margin-right:2px;border-radius:3px;overflow:hidden}
.strip{width:27px;margin-right:2px;background:#3a1c1a;display:flex;flex-direction:column;align-items:center;color:#b44a40;height:243px}
.strip span,.rail span{writing-mode:vertical-rl;transform:rotate(180deg);font-weight:700;color:#c8594c}
.cap,.cap2{width:27px;height:4px;flex:none}.cap{margin-top:8px}.cap2{margin-bottom:8px}
.sg{background:#868686}.sy{background:#d99e10}
.si{margin-top:10px;height:10px}.strip span{height:48px;margin-top:69px;text-align:center}
.sd{margin-top:46px}.sd+svg{margin-top:11px}.cap2{margin-top:auto}
.addl{margin:117px 6px 0 7px;color:#823831}
.device{height:219px;margin-top:12px;background:#281315;border-radius:7px;display:flex;overflow:hidden;flex:none}
.rail{width:27px;background:#3a1c1a;display:flex;flex-direction:column;align-items:center;padding-top:8px}
.or{color:#c86e14}
.r2{margin-top:9px}.rail span{height:48px;margin:50px 0 28px;text-align:center}.r4{margin-top:6px}.r5{margin-top:8px}
.mods{width:74px;padding-top:9px;display:flex;flex-direction:column;align-items:center}
.mods>*{flex:none}
.mw{font:500 11px Lato,sans-serif;fill:#a84038}
.mods>svg:first-child{overflow:visible}
.mm{margin-top:8px;color:#84504a}
.mods h4{margin:10px 0 2px;font:inherit;color:#b44a40}
.expr{display:grid;grid-template-columns:32px 32px;color:#8c5a32;font-size:10px;font-weight:400;row-gap:2px}
.expr span{display:flex;flex-direction:column;align-items:center;height:22px}
.addmod{width:68px;height:69px;border-radius:3px;background:#3a1c1a;color:#823831;display:flex;align-items:center;justify-content:center;margin-top:4px}
.col{display:flex;flex-direction:column}
.panel{height:141px;margin-top:3px;border-radius:3px;background:linear-gradient(#1e1112 0,#281315 24px,#281315 70%,#1d1011);display:flex}
.lower{height:75px;display:flex;position:relative}
.osc{width:213px;margin-right:3px}.flt{width:213px;margin-right:3px}.amp{width:181px;margin-right:3px}
.flt .panel,.amp .panel{flex-direction:column}

/* rotary control: --p pointer angle, --s/--e value arc */
.knob{--d:36px;--c:24px;--val:#4e2426;--cap1:#6a3233;--cap2:#46201f;--ptr:#f0705f;--pl:9px;position:relative;width:var(--d);height:var(--d);flex:none}
.knob::before{content:"";position:absolute;inset:0;border-radius:50%;background:conic-gradient(from -140deg,#4e2426 var(--s),var(--val) var(--s) var(--e),#4e2426 var(--e) 280deg,transparent 280deg);-webkit-mask:radial-gradient(closest-side,transparent calc(100% - 2.500px),#000 calc(100% - 2px));mask:radial-gradient(closest-side,transparent calc(100% - 2.500px),#000 calc(100% - 2px))}
.knob::after{content:"";position:absolute;inset:calc((var(--d) - var(--c))/2);border-radius:50%;background:linear-gradient(var(--ptr),var(--ptr)) 50% 0/2.500px var(--pl) no-repeat,linear-gradient(calc(180deg - var(--p)),var(--cap1),var(--cap2));transform:rotate(var(--p))}
.sm{--d:28px;--c:18px;--pl:6px}.lg{--d:43px;--c:31px;--pl:12px}.xl{--d:60px;--c:47px;--pl:16px}
.lit{--cap1:#fa7864;--cap2:#d25f50;--ptr:#1b0f10}
.knob.or{--val:#f26410}.pk{--val:#aa2c42}.br{--val:#6e4c32}.hot{--val:#d23c14}.gy{--val:#4c4446}.rd{--val:#c81414}
.outbox .knob{--cap1:#7a3833;--cap2:#50231f}
.kc{width:40px;display:flex;flex-direction:column;align-items:center;position:relative;color:#b44a40;font-size:11.500px}
.kc .knob{margin-bottom:-2px}

.oleft{width:69px;display:flex;flex-direction:column;align-items:center;position:relative;padding-top:28px;flex:none}
.oleft .knob{margin-top:17px}.kbd{margin-top:24px}
.sync{position:absolute;left:15px;bottom:-7px;width:39px;height:9px;border-radius:3px;background:#823831;color:#281315;font:700 8px/9px Lato,sans-serif;display:flex;align-items:center;justify-content:space-between;padding:0 1px;z-index:1}
.oright{width:144px}
.otitle{display:flex;align-items:center;height:20px;color:#e65f14}
.otitle span{margin-left:23px;width:55px}.otitle u{margin-left:46px}
.scope{margin:4px 0 0 31px}
.trio{display:flex;gap:16px;margin:4px 0 0 3px}
.shapes{gap:26px;margin:11px 0 0 8px}
.vals{display:flex;margin:11px 0 0 -3px;color:#d23c14;font-weight:400;font-size:11.500px;white-space:nowrap}
.v1{width:36px}.v2{width:30px}.v3{width:20px}.vals u{width:7px;color:#5c2c24;margin-right:4px}
.osc .lower{padding:19px 0 0 14px}
.osc .k1{padding-left:1px}
.corner{position:absolute;left:3px;top:1px}
.subwave{width:60px;margin:-3px 0 0 9px}
.oct{display:flex;position:relative;color:#b44a40;margin:7px 0 0 -3px}
.oct span{width:20px;text-align:center;height:17px}.oct .sel{color:#aa2c42;border-bottom:2px solid #aa2c42}
.oct .corner{left:0;top:-2px}
.k2{margin-left:36px}

.ftitle{height:20px;display:flex;align-items:center;padding-left:12px;color:#6e4c32;font-weight:400;font-size:11.500px}
.ftitle span{margin-left:49px;width:71px;white-space:nowrap}
.fbody{display:flex}
.fsrc{width:65px;padding-left:7px}
.fsrc div{display:flex;align-items:center}
.fsrc>div{height:36px}.fsrc .knob{margin-left:7px}
.fsrc>div:first-child{margin-top:-3px}
.fbig{width:60px;margin:21px 0 0 11px;text-align:center;color:#b44a40;font-weight:400;font-size:11.500px}
.fbig .knob{margin-bottom:-3px}
.fres{margin:29px 0 0 17px;display:flex;flex-direction:column;align-items:center;width:43px;flex:none}
.ftri{margin:47px 0 0 2px}
.flt .lower,.amp .lower{padding-top:19px}
.feg{width:42px;display:flex;flex-direction:column;align-items:center;color:#8c5a32;font-size:10px;font-weight:400;margin-top:2px;padding-right:1px}
.fe{margin-top:14px}
.atitle{height:20px;display:flex;align-items:center;color:#4c4446;padding-left:5px;font-weight:400;font-size:11.500px}
.atitle b,.legato{width:13px;height:13px;border-radius:2px;background:#4c4446;color:#1e1112;font:900 10px/13px Lato,sans-serif;text-align:center}
.atitle span{margin-left:57px;width:44px}.atitle svg{margin-left:28px;color:#8c5a32}
.graph{margin:-1px 0 0 18px}
.aknobs{display:flex;padding-left:10px;margin-top:15px}
.aknobs .knob{--c:25px}
.amp .lower{padding-left:18px}
.amp .lower .kc:nth-child(2){margin-left:12px}
.link{width:16px;height:2px;background:#4e2426;margin:18px -2px 0 -2px}
.legato{position:absolute;left:161px;top:54px;width:11px;height:11px;background:#823831;line-height:11px;font-size:9px}
.ramp{margin-top:7px}
.chain{width:80px}
.fx{width:71px;height:32px;margin:0 0 0 3px;color:#f0604c;font-weight:700;font-size:10.800px;text-align:center;padding-top:5px;background:linear-gradient(#3c6e82,#3c6e82) 0 0/100% 2px no-repeat,linear-gradient(#3c6e82,#3c6e82) 0 0/2px 4px no-repeat,linear-gradient(#3c6e82,#3c6e82) 100% 0/2px 4px no-repeat}
.fx:first-child{margin-top:6px}
.outbox{width:77px;height:149px;margin-top:-3px;background:#3a1c1a;border-radius:3px;padding-top:8px;display:flex;flex-direction:column;align-items:center}
.pair{display:flex}.pair .kc{width:32px}
.pair svg,.pan svg{margin-top:2px}
.pan{margin-top:5px}.out{margin-top:8px}
.addl.addr{margin-left:6px}

/* browser */
.browser{width:257px;margin-left:5px;display:flex;flex-direction:column}
.btabs{height:43px;padding:12px 0 0 9px;border-bottom:1px solid #6e2a24;display:flex;gap:6px;flex:none}
.quad{margin-right:7px}
.btabs svg:nth-child(4){margin-right:-2px}
.btabs .act{margin:-1px -1px 0}
.bhead{height:32px;display:flex;align-items:center;justify-content:flex-end;color:#b44a40;padding-right:8px}
.bhead span{margin-right:66px}
.kinds{display:flex;gap:9.500px;padding-left:2px;justify-content:center;height:31px}
.searchbox{height:21px;flex:none;margin:0 4px 0 7px;border-radius:4px;background:#1b1011;display:flex;align-items:center;padding:0 9px 0 6px;color:#f0604c}
.searchbox span{margin:0 auto 0 4px;font-size:11.500px}
.filters{height:25px;margin-top:1px;display:flex;align-items:center;padding-left:14px;color:#b44a40}
.filters+.filters{margin-top:0}
.filters span{display:flex;align-items:center;gap:9px}
.filters svg{color:#b9b0b0}
.w1{width:82px}.w2{width:83px}.w3{width:124px}
.files{list-style:none;margin:3px 0 0;padding:0;background:#1b1011;height:629px;overflow:hidden;flex:none}
.files li{height:23px;display:flex;align-items:center;padding-left:10px;gap:8px;color:#dc5847}
.files svg{width:17px;height:17px}
.files .ghost{height:7px;padding:0}
.files .ghost::before{content:"";width:14px;height:5px;margin:-2px 0 0 11px;border:1px solid #4a2a1c;border-top:0}
.files .cur{background:#331819}
.files .fade{opacity:.75}
.picked{height:29px;display:flex;align-items:center;padding:0 9px 0 10px;color:#e25a4a}
.picked b{margin:0 auto 0 9px}
.meta{display:flex;align-items:center;height:44px;padding-left:8px}
.note{width:39px;height:39px;border-radius:4px;background:linear-gradient(#3d1d1f,#1e1112);display:flex;align-items:center;justify-content:space-between;padding:0 2px 0 9px;color:#823831}
.mc{display:flex;flex-direction:column;align-items:center;height:32px;gap:2px;font-weight:400}
.m1{width:69px;color:#4c4042}.m2{width:67px;color:#8c3c34}.m2 span+span{color:#b44a40;font-weight:500}.m3{width:53px;color:#8c3c34}
.m3 svg{margin-top:1px}
.preview{height:40px;margin:2px 4px 0 7px;border-radius:4px;background:#1b1011;display:flex;align-items:center;padding-left:4px}
.gain{width:13px;height:27px;margin-right:4px;background:#502c12;border-top:2px solid #a05a14}
.preview div{margin-left:6px;display:flex;flex-direction:column;gap:5px}

/* status bar */
.status{height:36px;flex:none;display:flex;align-items:center;padding:3px 6px 0 20px;color:#b44a40;font-size:11.300px}
.bar{width:2px;height:19px;background:#823831;margin-left:17px}
.t1{margin-left:15px;width:67px;color:#c86e14}.t2{width:37px}.t3{width:40px}.b2{margin-left:0}
.q1{margin-left:13px}.q2{margin-left:19px}.q3{margin-left:17px}.q4{margin-left:16px}
.e1{margin-left:auto}.e2{margin-left:20px}.e3{margin-left:19px}.e4{margin-left:19px}.b3{margin-left:14px}.e5{margin-left:14px}
```
